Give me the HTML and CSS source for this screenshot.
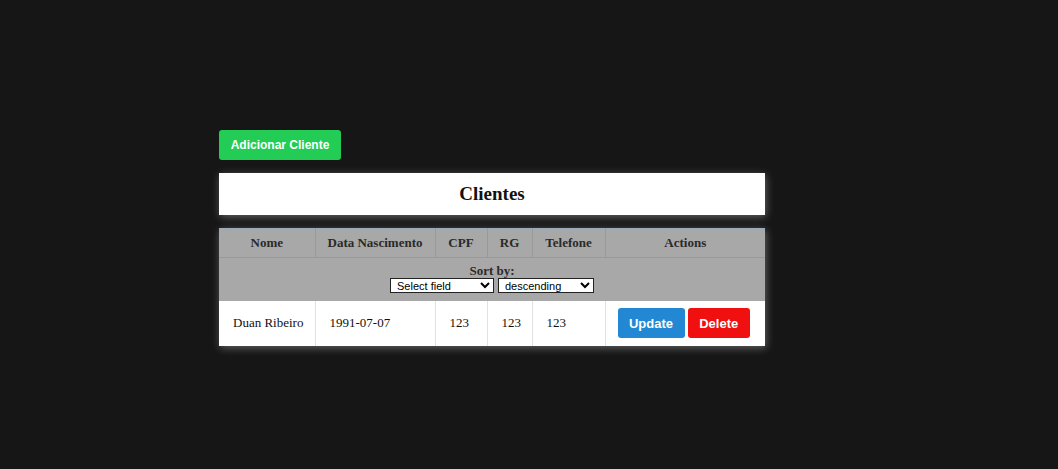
FILE: index.html
```html
<!DOCTYPE html>
<html>
<head>
<meta charset="utf-8">
<link rel="stylesheet" href="styles.css">
</head>
<body>
<div class="page">
  <button class="btn btn-add">Adicionar Cliente</button>
  <div class="title-box"><h2>Clientes</h2></div>
  <table class="clients">
    <thead>
      <tr class="head-row">
        <th class="c-nome">Nome</th>
        <th class="c-data">Data Nascimento</th>
        <th class="c-cpf">CPF</th>
        <th class="c-rg">RG</th>
        <th class="c-tel">Telefone</th>
        <th class="c-act">Actions</th>
      </tr>
      <tr class="sort-row">
        <th colspan="6">
          <div class="sort-label">Sort by:</div>
          <div class="sort-controls">
            <select class="sel sel-field"><option>Select field</option></select>
            <select class="sel sel-order"><option>descending</option></select>
          </div>
        </th>
      </tr>
    </thead>
    <tbody>
      <tr class="data-row">
        <td>Duan Ribeiro</td>
        <td>1991-07-07</td>
        <td>123</td>
        <td>123</td>
        <td>123</td>
        <td class="actions">
          <button class="btn btn-update">Update</button>
          <button class="btn btn-delete">Delete</button>
        </td>
      </tr>
    </tbody>
  </table>
</div>
</body>
</html>
```

FILE: styles.css
```css
html, body {
  margin: 0;
  padding: 0;
  background: #161616;
  height: 100%;
}
.page {
  width: 546px;
  margin-left: 219px;
  padding-top: 130px;
  display: flex;
  flex-direction: column;
  align-items: flex-start;
}
.btn {
  font-family: "Liberation Sans", Arial, sans-serif;
  font-weight: bold;
  font-size: 13px;
  color: #fff;
  border: none;
  border-radius: 3px;
  height: 30px;
  padding: 0;
  cursor: pointer;
}
.btn-add {
  background: #22cc55;
  width: 122px;
  font-size: 12px;
}
.title-box {
  margin-top: 13px;
  width: 546px;
  height: 42px;
  background: #fff;
  box-shadow: 1px 2px 8px rgba(190, 190, 190, 0.45);
  display: flex;
  align-items: center;
  justify-content: center;
}
.title-box h2 {
  margin: 0;
  font-family: "Liberation Serif", "Times New Roman", serif;
  font-size: 19px;
  font-weight: bold;
  color: #111;
}
.clients {
  margin-top: 13px;
  width: 546px;
  border-collapse: collapse;
  table-layout: fixed;
  font-family: "Liberation Serif", "Times New Roman", serif;
  font-size: 13px;
  color: #111;
  box-shadow: 1px 2px 8px rgba(190, 190, 190, 0.45);
  border-top: 1px solid #9aaabb;
}
.clients th,
.clients td {
  box-sizing: border-box;
}
.clients th {
  background: #a8a8a8;
  font-weight: bold;
  color: #2a2a2a;
}
.head-row th {
  height: 29px;
  padding: 0;
  border-left: 1px solid #999;
  border-bottom: 1px solid #999;
}
.head-row th:first-child { border-left: none; }
.c-nome { width: 96px; }
.c-data { width: 120px; }
.c-cpf { width: 52px; }
.c-rg { width: 45px; }
.c-tel { width: 73px; }
.c-act { width: 160px; }
.sort-row th {
  height: 43px;
  padding: 0;
  vertical-align: top;
}
.sort-label {
  margin-top: 6px;
  line-height: 14px;
}
.sort-controls {
  display: flex;
  justify-content: center;
  gap: 4px;
}
.sel {
  font-family: "Liberation Sans", Arial, sans-serif;
  font-size: 11px;
  height: 15px;
  padding: 0 0 0 2px;
  border: 1px solid #222;
  background: #fff;
  color: #000;
  border-radius: 0;
}
.sel-field { width: 104px; }
.sel-order { width: 96px; }
.data-row td {
  background: #fff;
  height: 45px;
  padding: 0 0 0 14px;
  border-left: 1px solid #e2e2e2;
}
.data-row td:first-child { border-left: none; }
.data-row td.actions {
  padding: 0 0 0 12px;
}
.btn-update {
  background: #2288d4;
  width: 67px;
}
.btn-delete {
  background: #f01010;
  width: 62px;
}
```
